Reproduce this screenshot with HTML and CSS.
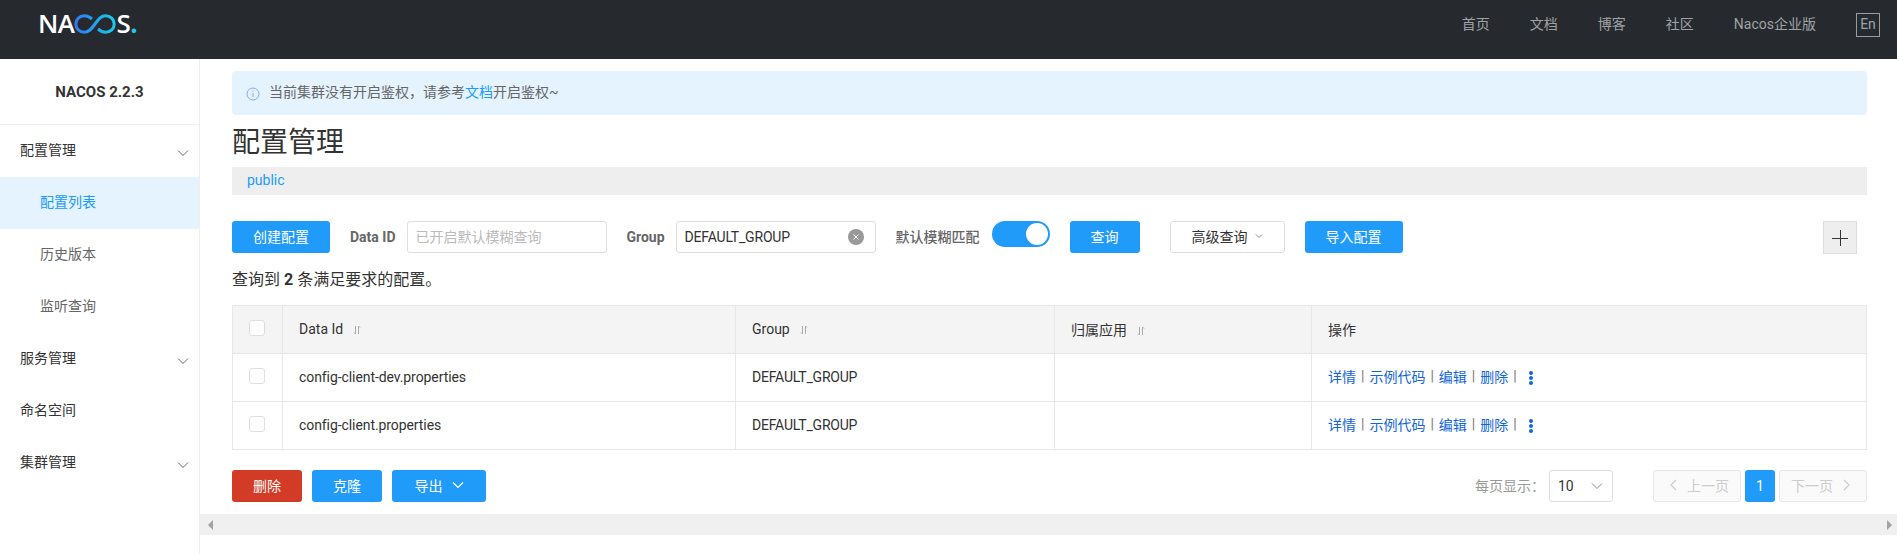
FILE: index.html
```html
<!DOCTYPE html>
<html>
<head>
    <meta charset="UTF-8">
    <title>Nacos</title>
    <link rel="stylesheet" href="styles.css">
</head>
<body>
    <header class="topbar">
        <div class="logo">
            <span class="logo-text">NA</span>
            <svg class="logo-loop" width="42" height="20" viewBox="0 0 42 20" fill="none">
                <defs>
                    <linearGradient id="loop-grad" x1="0" y1="0" x2="1" y2="0">
                        <stop offset="0" stop-color="#2f7bf5"/>
                        <stop offset="1" stop-color="#19cbe6"/>
                    </linearGradient>
                </defs>
                <path d="M18 5C15.500 2.800 13.500 1.800 10.500 1.800C5.500 1.800 1.800 5.300 1.800 10C1.800 14.700 5.500 18.200 10.500 18.200C15.500 18.200 18 14 21 10C24 6 26.500 1.800 31.500 1.800C36.500 1.800 40.200 5.300 40.200 10C40.200 14.700 36.500 18.200 31.500 18.200C28.500 18.200 26.500 17.200 24 15" stroke="url(#loop-grad)" stroke-width="3"/>
            </svg>
            <span class="logo-text">S</span><span class="logo-dot">.</span>
        </div>
        <nav class="topnav">
            <a>首页</a>
            <a>文档</a>
            <a>博客</a>
            <a>社区</a>
            <a>Nacos企业版</a>
            <span class="lang">En</span>
        </nav>
    </header>

    <div class="page">
        <aside class="sidebar">
            <div class="version">NACOS 2.2.3</div>
            <ul class="menu">
                <li class="menu-item">配置管理<svg class="chev" width="12" height="12" viewBox="0 0 12 12"><path d="M1 3.500L6 8.500L11 3.500" fill="none" stroke="#666" stroke-width="1"/></svg></li>
                <li class="menu-item sub active">配置列表</li>
                <li class="menu-item sub">历史版本</li>
                <li class="menu-item sub">监听查询</li>
                <li class="menu-item">服务管理<svg class="chev" width="12" height="12" viewBox="0 0 12 12"><path d="M1 3.500L6 8.500L11 3.500" fill="none" stroke="#666" stroke-width="1"/></svg></li>
                <li class="menu-item">命名空间</li>
                <li class="menu-item">集群管理<svg class="chev" width="12" height="12" viewBox="0 0 12 12"><path d="M1 3.500L6 8.500L11 3.500" fill="none" stroke="#666" stroke-width="1"/></svg></li>
            </ul>
        </aside>

        <main class="main">
            <div class="content">
                <div class="notice">
                    <svg class="notice-icon" width="16" height="16" viewBox="0 0 16 16" fill="none">
                        <circle cx="8" cy="8" r="6" stroke="#7fa8f8" stroke-width="1"/>
                        <path d="M8 7V11" stroke="#7fa8f8" stroke-width="1"/>
                        <path d="M8 4.500V5.500" stroke="#7fa8f8" stroke-width="1"/>
                    </svg>
                    <span>当前集群没有开启鉴权，请参考<a class="link">文档</a>开启鉴权~</span>
                </div>
                <h1 class="page-title">配置管理</h1>
                <div class="namespace"><a class="link">public</a></div>

                <div class="toolbar">
                    <button class="btn primary w98">创建配置</button>
                    <label class="field-label data-id">Data ID</label>
                    <div class="input placeholder">已开启默认模糊查询</div>
                    <label class="field-label group">Group</label>
                    <div class="input caps">
                        DEFAULT_GROUP
                        <span class="clear">
                            <svg width="8" height="8" viewBox="0 0 8 8"><path d="M1.500 1.500L6.500 6.500M6.500 1.500L1.500 6.500" stroke="#fff" stroke-width="1"/></svg>
                        </span>
                    </div>
                    <label class="field-label fuzzy">默认模糊匹配</label>
                    <div class="switch"><span class="knob"></span></div>
                    <button class="btn primary w70 query">查询</button>
                    <button class="btn normal advanced">高级查询<svg width="8" height="8" viewBox="0 0 8 8"><path d="M1 2.500L4 5.500L7 2.500" fill="none" stroke="#888" stroke-width="1"/></svg></button>
                    <button class="btn primary w98 import">导入配置</button>
                    <button class="add-btn">
                        <svg width="16" height="16" viewBox="0 0 16 16"><path d="M0 8.500H16M8.500 0V16" stroke="#333" stroke-width="1"/></svg>
                    </button>
                </div>

                <p class="result">查询到 <b>2</b> 条满足要求的配置。</p>

                <table class="grid">
                    <thead>
                        <tr>
                            <th class="col-check"><span class="checkbox"></span></th>
                            <th class="col-id">Data Id<svg class="sort" width="8" height="10" viewBox="0 0 8 10"><path d="M2.500 1V9L1 7.500M5.500 9V1L7 2.500" fill="none" stroke="#aaa" stroke-width="1"/></svg></th>
                            <th class="col-group">Group<svg class="sort" width="8" height="10" viewBox="0 0 8 10"><path d="M2.500 1V9L1 7.500M5.500 9V1L7 2.500" fill="none" stroke="#aaa" stroke-width="1"/></svg></th>
                            <th class="col-app">归属应用<svg class="sort" width="8" height="10" viewBox="0 0 8 10"><path d="M2.500 1V9L1 7.500M5.500 9V1L7 2.500" fill="none" stroke="#aaa" stroke-width="1"/></svg></th>
                            <th>操作</th>
                        </tr>
                    </thead>
                    <tbody>
                        <tr>
                            <td><span class="checkbox"></span></td>
                            <td class="name">config-client-dev.properties</td>
                            <td class="caps">DEFAULT_GROUP</td>
                            <td></td>
                            <td>
                                <div class="ops">
                                    <a>详情</a><span class="sep">|</span><a>示例代码</a><span class="sep">|</span><a>编辑</a><span class="sep">|</span><a>删除</a><span class="sep">|</span><span class="more"><i></i><i></i><i></i></span>
                                </div>
                            </td>
                        </tr>
                        <tr>
                            <td><span class="checkbox"></span></td>
                            <td class="name">config-client.properties</td>
                            <td class="caps">DEFAULT_GROUP</td>
                            <td></td>
                            <td>
                                <div class="ops">
                                    <a>详情</a><span class="sep">|</span><a>示例代码</a><span class="sep">|</span><a>编辑</a><span class="sep">|</span><a>删除</a><span class="sep">|</span><span class="more"><i></i><i></i><i></i></span>
                                </div>
                            </td>
                        </tr>
                    </tbody>
                </table>

                <div class="footer-row">
                    <div class="bulk">
                        <button class="btn danger w70">删除</button>
                        <button class="btn primary w70">克隆</button>
                        <button class="btn primary export">导出<svg width="12" height="12" viewBox="0 0 12 12"><path d="M1 3.500L6 8.500L11 3.500" fill="none" stroke="#fff" stroke-width="1.200"/></svg></button>
                    </div>
                    <div class="pager">
                        <span class="page-size-label">每页显示：</span>
                        <div class="page-size">10<svg width="12" height="12" viewBox="0 0 12 12"><path d="M1 3.500L6 8.500L11 3.500" fill="none" stroke="#888" stroke-width="1"/></svg></div>
                        <button class="page-btn prev"><svg width="10" height="12" viewBox="0 0 10 12"><path d="M8 1L3 6L8 11" fill="none" stroke="#ccc" stroke-width="1.200"/></svg>上一页</button>
                        <button class="page-num">1</button>
                        <button class="page-btn next">下一页<svg width="10" height="12" viewBox="0 0 10 12"><path d="M2 1L7 6L2 11" fill="none" stroke="#ccc" stroke-width="1.200"/></svg></button>
                    </div>
                </div>
            </div>

            <div class="hscroll">
                <svg width="6" height="10" viewBox="0 0 6 10"><path d="M5 0V10L0 5Z" fill="#a3a3a3"/></svg>
                <svg width="6" height="10" viewBox="0 0 6 10"><path d="M1 0V10L6 5Z" fill="#a3a3a3"/></svg>
            </div>
        </main>
    </div>
</body>
</html>
```

FILE: styles.css
```css
* {
    box-sizing: border-box;
}

html, body {
    margin: 0;
    padding: 0;
    height: 100%;
    overflow: hidden;
}

body {
    background-color: #fff;
    color: #333;
    font-family: Roboto, "Noto Sans CJK SC", sans-serif;
    font-size: 14px;
}

.link {
    color: #209bfa;
}

.caps {
    letter-spacing: -0.2px;
}

/* top bar */
.topbar {
    height: 59px;
    background-color: #262a2f;
    display: flex;
    align-items: flex-start;
    justify-content: space-between;
}

.logo {
    display: flex;
    align-items: center;
    height: 19px;
    margin: 14px 0 0 38px;
}

.logo-text {
    color: #fff;
    font-family: "Open Sans", sans-serif;
    font-size: 26px;
    font-weight: 600;
    letter-spacing: -0.5px;
    line-height: 19px;
}

.logo-loop {
    margin: 0 1px 0 -1px;
}

.logo-dot {
    color: #19cbe6;
    font-family: "Open Sans", sans-serif;
    font-size: 26px;
    font-weight: 700;
    line-height: 19px;
}

.topnav {
    display: flex;
    align-items: center;
    color: #a0a2a4;
    margin: 13px 17px 0 0;
    height: 24px;
}

.topnav a {
    margin-right: 40px;
    padding-bottom: 4px;
}

.lang {
    width: 24px;
    height: 24px;
    border: 1px solid #9a9c9e;
    line-height: 21px;
    text-align: center;
}

/* page */
.page {
    display: flex;
    height: calc(100vh - 59px);
}

.sidebar {
    width: 200px;
    flex: none;
    border-right: 1px solid #eee;
}

.version {
    height: 66px;
    line-height: 66px;
    text-align: center;
    font-size: 15px;
    font-weight: 700;
    border-bottom: 1px solid #eee;
}

.menu {
    list-style: none;
    margin: 0;
    padding: 0;
}

.menu-item {
    height: 52px;
    padding: 0 0 4px 20px;
    display: flex;
    align-items: center;
    justify-content: space-between;
}

.menu-item.sub {
    padding-left: 40px;
    color: #666;
}

.menu-item.active {
    background-color: #e4f3fe;
    color: #209bfa;
}

.chev {
    margin: 8px 10px 0 0;
}

.main {
    flex: 1;
    min-width: 0;
}

.content {
    height: 455px;
    padding: 12px 30px 0 32px;
}

/* notice */
.notice {
    height: 44px;
    background-color: #e4f3fe;
    border-radius: 4px;
    display: flex;
    align-items: center;
    padding: 0 0 4px 13px;
    color: #666;
}

.notice-icon {
    margin-right: 8px;
    position: relative;
    top: 3px;
}

.page-title {
    margin: 0;
    height: 52px;
    line-height: 56px;
    font-size: 28px;
    font-weight: 400;
    color: #333;
}

.namespace {
    height: 28px;
    line-height: 26px;
    background-color: #eee;
    padding-left: 15px;
}

/* toolbar */
.toolbar {
    display: flex;
    align-items: flex-start;
    margin-top: 26px;
}

.btn {
    height: 32px;
    border: 1px solid transparent;
    border-radius: 3px;
    font-family: inherit;
    font-size: 14px;
    padding: 0 0 2px;
    flex: none;
}

.btn.primary {
    background-color: #209bfa;
    color: #fff;
}

.btn.danger {
    background-color: #d23c26;
    color: #fff;
}

.btn.normal {
    background-color: #fff;
    border-color: #dcdee3;
    color: #333;
}

.w70 {
    width: 70px;
}

.w98 {
    width: 98px;
}

.field-label {
    font-weight: 700;
    color: #666;
    line-height: 32px;
}

.data-id {
    margin: 0 11px 0 20px;
}

.group {
    margin: 0 11px 0 20px;
}

.fuzzy {
    margin: 0 12px 0 20px;
    font-weight: 500;
}

.input {
    width: 200px;
    height: 32px;
    line-height: 30px;
    border: 1px solid #dcdee3;
    border-radius: 3px;
    padding-left: 8px;
    position: relative;
    flex: none;
}

.input.placeholder {
    color: #bbb;
}

.clear {
    position: absolute;
    right: 11px;
    top: 7px;
    width: 16px;
    height: 16px;
    border-radius: 50%;
    background-color: #999;
    display: flex;
    align-items: center;
    justify-content: center;
}

.switch {
    width: 58px;
    height: 26px;
    border-radius: 13px;
    background-color: #209bfa;
    padding: 2px;
    display: flex;
    justify-content: flex-end;
    flex: none;
}

.knob {
    width: 22px;
    height: 22px;
    border-radius: 50%;
    background-color: #fff;
}

.query {
    margin-left: 20px;
}

.advanced {
    width: 115px;
    margin-left: 30px;
    display: flex;
    align-items: center;
    justify-content: center;
    gap: 7px;
}

.import {
    margin-left: 20px;
}

.add-btn {
    width: 34px;
    height: 33px;
    margin-left: auto;
    margin-right: 10px;
    background-color: #eee;
    border: 1px solid #ddd;
    padding: 0;
    display: flex;
    align-items: center;
    justify-content: center;
}

.result {
    margin: 0;
    height: 51px;
    line-height: 51px;
    font-size: 16px;
}

/* table */
.grid {
    width: 100%;
    border-collapse: collapse;
    table-layout: fixed;
    border: 1px solid #e6e7eb;
}

.grid th, .grid td {
    height: 48px;
    padding: 0 16px 2px;
    border: 1px solid #e6e7eb;
    font-weight: 400;
    text-align: left;
    vertical-align: middle;
}

.grid th {
    background-color: #f4f4f4;
}

.col-check {
    width: 50px;
}

.col-id {
    width: 453px;
}

.col-group {
    width: 319px;
}

.col-app {
    width: 257px;
}

.name {
    letter-spacing: -0.08px;
}

.sort {
    margin-left: 10px;
    vertical-align: -1px;
}

.checkbox {
    display: block;
    width: 16px;
    height: 16px;
    border: 1px solid #dcdee3;
    border-radius: 3px;
    background-color: #fff;
    margin-top: -2px;
}

.ops {
    display: flex;
    align-items: center;
    color: #777;
}

.ops a {
    color: #1166d8;
    padding-bottom: 2px;
}

.sep {
    margin: 0 5px;
    padding-bottom: 2px;
}

.more {
    display: flex;
    flex-direction: column;
    gap: 1px;
    margin: 2px 0 0 7px;
}

.more i {
    width: 4px;
    height: 4px;
    border-radius: 50%;
    background-color: #1166d8;
}

/* footer */
.footer-row {
    display: flex;
    justify-content: space-between;
    margin-top: 20px;
}

.bulk {
    display: flex;
    gap: 10px;
}

.export {
    width: 94px;
    display: flex;
    align-items: center;
    justify-content: center;
    gap: 9px;
}

.pager {
    display: flex;
    align-items: center;
}

.page-size-label {
    color: #999;
    margin-right: 4px;
    padding-bottom: 2px;
}

.page-size {
    width: 64px;
    height: 32px;
    border: 1px solid #dcdee3;
    border-radius: 3px;
    padding: 0 9px 0 8px;
    display: flex;
    align-items: center;
    justify-content: space-between;
}

.page-btn {
    width: 88px;
    height: 32px;
    background-color: #fafafa;
    border: 1px solid #e6e7eb;
    border-radius: 3px;
    color: #ccc;
    font-family: inherit;
    font-size: 14px;
    padding: 0 0 2px;
    display: flex;
    align-items: center;
    justify-content: center;
    gap: 9px;
}

.prev {
    margin-left: 40px;
    padding-left: 3px;
}

.next {
    padding-right: 3px;
}

.page-num {
    width: 30px;
    height: 32px;
    margin: 0 4px;
    background-color: #209bfa;
    color: #fff;
    border: 0;
    border-radius: 3px;
    font-family: inherit;
    font-size: 14px;
    padding: 0;
}

/* scrollbar strip, no thumb */
.hscroll {
    height: 21px;
    background-color: #f0f0f0;
    display: flex;
    align-items: center;
    justify-content: space-between;
    padding: 0 5px 0 8px;
}
```
